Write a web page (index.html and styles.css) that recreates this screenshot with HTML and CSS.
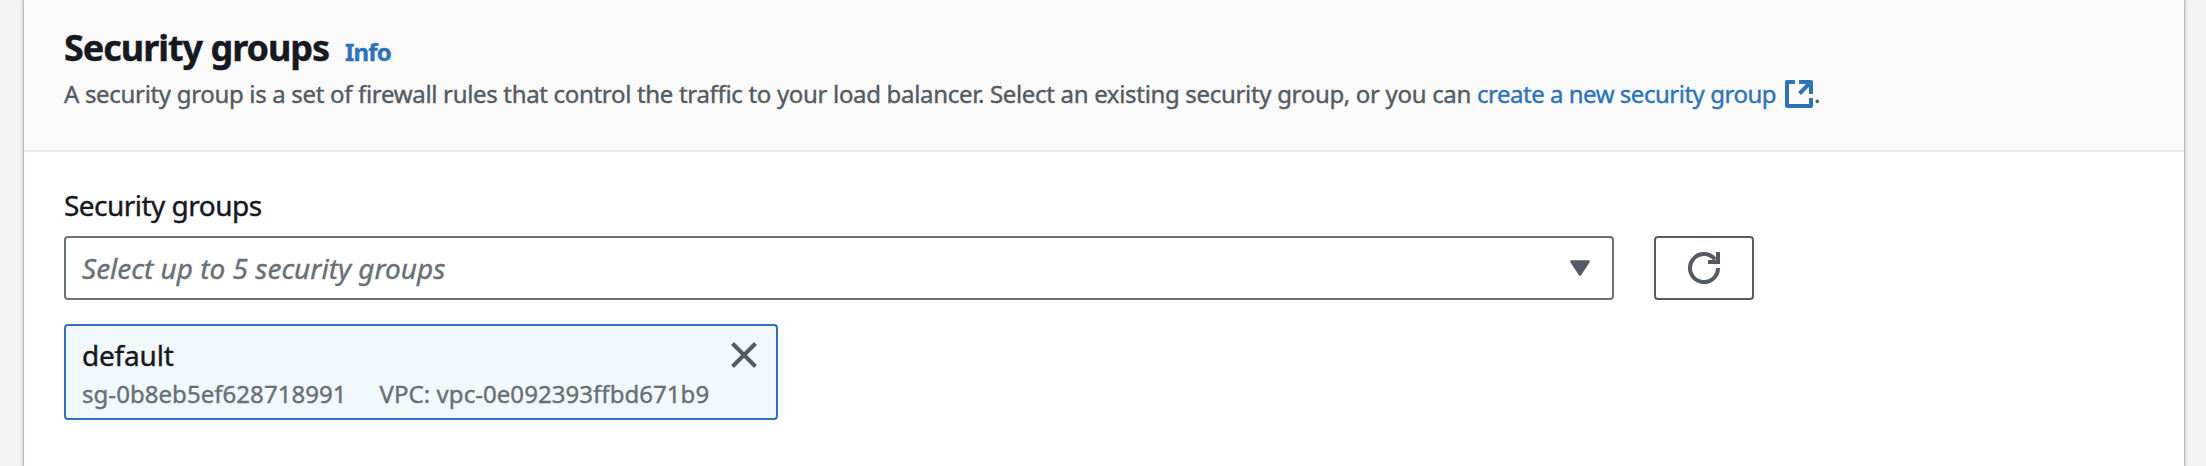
FILE: index.html
```html
<!DOCTYPE html>
<html lang="en">
<head>
<meta charset="utf-8">
<title>Security groups</title>
<link rel="stylesheet" href="styles.css">
</head>
<body>
<section class="panel">
  <header class="panel-header">
    <div class="title-row">
      <h2 class="title">Security groups</h2>
      <a class="info">Info</a>
    </div>
    <p class="description"><span class="description-text">A security group is a set of firewall rules that control the traffic to your load balancer. Select an existing security group, or you can</span><a class="link">create a new security group</a><svg class="external" viewBox="0 0 28 28" aria-hidden="true"><path d="M10 2H2v24h24V18M14 2h12v12M25 3 14.5 13.5" fill="none" stroke="currentColor" stroke-width="4" stroke-linejoin="round"/></svg><span class="period">.</span></p>
  </header>
  <div class="panel-body">
    <label class="label">Security groups</label>
    <div class="controls">
      <div class="select">
        <span class="placeholder">Select up to 5 security groups</span>
        <svg class="caret" viewBox="0 0 20 16" aria-hidden="true"><path d="M1.5 1.5h17L10 14.5z" fill="currentColor" stroke="currentColor" stroke-width="2.6" stroke-linejoin="round"/></svg>
      </div>
      <button class="refresh" aria-label="Refresh">
        <svg viewBox="0 0 32 32" aria-hidden="true"><path d="M30 16A14 14 0 1 1 27 7.4" fill="none" stroke="currentColor" stroke-width="4"/><path d="M30 0v10H20" fill="none" stroke="currentColor" stroke-width="4"/></svg>
      </button>
    </div>
    <div class="token">
      <div class="token-text">
        <div class="token-name">default</div>
        <div class="token-details"><span>sg-0b8eb5ef628718991</span><span>VPC: vpc-0e092393ffbd671b9</span></div>
      </div>
      <svg class="close" viewBox="0 0 26 26" aria-hidden="true"><path d="M1.500 1.500l23 23M24.500 1.500l-23 23" fill="none" stroke="currentColor" stroke-width="4"/></svg>
    </div>
  </div>
</section>
</body>
</html>
```
FILE: styles.css
```css
* { box-sizing: border-box; }

body {
  margin: 0;
  height: 466px;
  padding: 0 22px 0 24px;
  overflow: hidden;
  background: #f2f3f3;
  color: #16191f;
  font-family: "Noto Sans", "Open Sans", sans-serif;
  -webkit-text-stroke: 0.4px currentColor;
}

.panel {
  height: 466px;
  background: #fff;
  box-shadow: 0 0 0 1px #b9bfc1, 0 0 3px 1px rgba(0, 28, 36, 0.3);
}

.panel-header {
  height: 152px;
  padding: 26px 40px 0;
  background: #fafafa;
  border-bottom: 2px solid #ebebeb;
}

.title-row {
  display: flex;
  align-items: baseline;
  gap: 16px;
  height: 44px;
}

.title {
  margin: 0;
  font-size: 36px;
  line-height: 44px;
  font-weight: 700;
  letter-spacing: -1.03px;
}

.info {
  color: #2e73b8;
  font-size: 24px;
  font-weight: 700;
  letter-spacing: -0.9px;
}

.description {
  display: flex;
  margin: 6px 0 0;
  color: #545b64;
  font-size: 24px;
  line-height: 36px;
  white-space: nowrap;
}

.description-text {
  margin-right: 6px;
  letter-spacing: -0.32px;
}

.link {
  color: #2e73b8;
  letter-spacing: -0.48px;
}

.external {
  width: 28px;
  height: 28px;
  margin: 4px 1px 0 9px;
  color: #2e73b8;
}

.panel-body { padding: 33px 40px 0; }

.label {
  display: block;
  font-size: 28px;
  line-height: 40px;
  letter-spacing: -0.53px;
}

.controls {
  display: flex;
  gap: 40px;
  margin-top: 11px;
}

.select {
  display: flex;
  align-items: center;
  justify-content: space-between;
  width: 1550px;
  height: 64px;
  padding: 0 22px 0 16px;
  border: 2px solid #687078;
  border-radius: 4px;
}

.placeholder {
  padding-bottom: 1px;
  color: #687078;
  font-size: 28px;
  line-height: 38px;
  font-style: italic;
}

.caret {
  width: 20px;
  height: 16px;
  color: #545b64;
}

.refresh {
  display: flex;
  align-items: center;
  justify-content: center;
  width: 100px;
  height: 64px;
  padding: 0;
  border: 2px solid #545b64;
  border-radius: 4px;
  background: #fff;
  color: #545b64;
}

.refresh svg {
  width: 32px;
  height: 32px;
}

.token {
  display: flex;
  justify-content: space-between;
  width: 714px;
  height: 96px;
  margin-top: 24px;
  padding: 9px 19px 0 16px;
  border: 2px solid #2e73b8;
  border-radius: 4px;
  background: #f2f9fd;
}

.token-name {
  font-size: 28px;
  line-height: 40px;
  letter-spacing: -0.2px;
}

.token-details {
  display: flex;
  gap: 33px;
  margin-top: 1px;
  color: #687078;
  font-size: 24px;
  line-height: 36px;
  letter-spacing: 0.05px;
}

.close {
  width: 26px;
  height: 26px;
  margin-top: 7px;
  color: #545b64;
}
```
